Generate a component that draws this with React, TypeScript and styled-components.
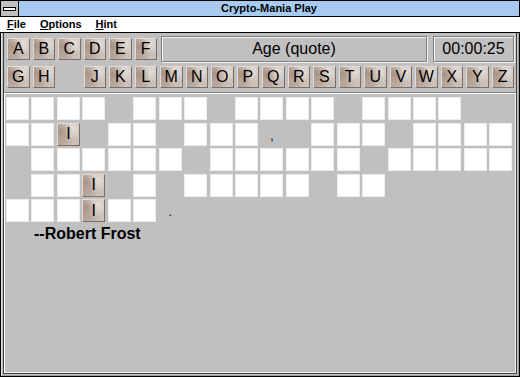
import React from 'react'
import styled, { createGlobalStyle } from 'styled-components'

const GlobalStyle = createGlobalStyle`
    html, body {
        margin: 0;
        padding: 0;
        background: #c0c0c0;
    }
    body {
        font-family: 'Liberation Sans', Arial, sans-serif;
    }
`

const Window = styled.div`
    width: 520px;
    height: 377px;
    box-sizing: border-box;
    display: flex;
    flex-direction: column;
    background: #c0c0c0;
    overflow: hidden;
`

const TitleBar = styled.div`
    height: 15px;
    display: flex;
    align-items: stretch;
    background: #a6caf0;
    border-top: 1px solid #000;
    border-bottom: 1px solid #000;
    border-right: 1px solid #000;
`

const SysMenu = styled.div`
    width: 17px;
    border-left: 1px solid #000;
    border-right: 1px solid #000;
    background: #c0c0c0;
    display: flex;
    align-items: center;
    justify-content: center;

    & > span {
        display: block;
        width: 11px;
        height: 2px;
        background: #fff;
        border: 1px solid #000;
    }
`

const Title = styled.div`
    flex: 1;
    text-align: center;
    font-size: 11px;
    font-weight: 700;
    line-height: 15px;
    color: #000;
`

const MenuBar = styled.div`
    height: 15px;
    display: flex;
    background: #fff;
    border-bottom: 1px solid #000;
`

const MenuItem = styled.div`
    padding: 0 7px;
    font-size: 11px;
    font-weight: 700;
    line-height: 15px;
    color: #000;

    u {
        text-decoration: underline;
        text-underline-offset: 1px;
    }
`

const Frame = styled.div`
    flex: 1;
    display: flex;
    border-left: 1px solid #000;
    border-right: 1px solid #000;
    border-bottom: 1px solid #000;
    padding: 0 2px 2px 2px;
    background: #c0c0c0;
    box-shadow: inset 1px 0 #e0e0e0, inset -1px -1px #a0a0a0;
`

const Client = styled.div`
    flex: 1;
    display: flex;
    flex-direction: column;
    border-left: 1px solid #404040;
    border-right: 1px solid #404040;
    border-bottom: 1px solid #404040;
    background: #c0c0c0;
    min-height: 0;
`

const Controls = styled.div`
    display: flex;
    flex-direction: column;
    gap: 4px;
    padding: 3px 0 0 3px;
    width: 507px;
`

const TopRow = styled.div`
    display: flex;
    align-items: center;
    height: 26px;
`

const TileRow = styled.div`
    display: grid;
    grid-template-columns: repeat(20, 22.5px);
    column-gap: 3px;
    height: 22px;
`

const Tile = styled.div<{ $small?: boolean }>`
    width: ${({ $small }) => ($small ? '23px' : '22.5px')};
    height: ${({ $small }) => ($small ? '23px' : '22px')};
    box-sizing: border-box;
    display: flex;
    align-items: center;
    justify-content: center;
    font-size: 16px;
    color: #000;
    border: 1px solid;
    border-color: #e4dcd4 #7a6e66 #7a6e66 #e4dcd4;
    background:
        radial-gradient(ellipse at 18% 35%, rgba(140, 112, 98, 0.45), transparent 45%),
        radial-gradient(ellipse at 30% 80%, rgba(150, 125, 110, 0.35), transparent 40%),
        radial-gradient(circle at 75% 25%, rgba(240, 234, 228, 0.55), transparent 45%),
        radial-gradient(circle at 65% 80%, rgba(176, 162, 150, 0.35), transparent 40%),
        repeating-linear-gradient(55deg, rgba(255, 255, 255, 0.08) 0 1px, rgba(90, 70, 60, 0.07) 1px 3px),
        linear-gradient(90deg, #b8a89c 0%, #cfc3ba 35%, #dad0c8 65%, #d2c8c0 100%);
`

const TopTiles = styled.div`
    display: flex;
    gap: 3px;
`

const InfoBox = styled.div<{ $width?: number }>`
    height: 26px;
    box-sizing: border-box;
    display: flex;
    align-items: center;
    justify-content: center;
    font-size: 16px;
    color: #000;
    background: #c0c0c0;
    border: 1px solid #808080;
    box-shadow: inset 1px 1px #f4f4f4, 1px 1px #f4f4f4;
    ${({ $width }) => ($width ? `width: ${$width}px;` : 'flex: 1;')}
`

const Category = styled(InfoBox)`
    margin-left: 4px;
    margin-right: 6px;
`

const Board = styled.div`
    flex: 1;
    margin-top: 4px;
    border-top: 1px solid #808080;
    box-shadow: inset 1px 1px #fff, inset -1px -1px #f0f0f0;
    padding: 4px 0 0 2px;
`

const Grid = styled.div`
    display: grid;
    grid-template-columns: repeat(20, 23px);
    grid-auto-rows: 23px;
    column-gap: 2.45px;
    row-gap: 2.5px;
`

const Cell = styled.div`
    box-sizing: border-box;
    background: #fff;
    border: 1px solid #ececec;
`

const Gap = styled.div`
    display: flex;
    align-items: center;
    justify-content: center;
    font-size: 12px;
    line-height: 23px;
    padding-top: 4px;
    color: #000;
`

const Author = styled.div`
    margin-top: 3px;
    padding-left: 28px;
    font-size: 16px;
    font-weight: 700;
    line-height: 18px;
    color: #000;
`

const lines = [
    '____ ___ ____ ____',
    '__I __ ___, ___ ____',
    ' ______ ______ _____',
    ' __I _ _____ __',
    '___I__.'
]

const row1 = ['A', 'B', 'C', 'D', 'E', 'F']
const row2 = ['G', 'H', '', 'J', 'K', 'L', 'M', 'N', 'O', 'P', 'Q', 'R', 'S', 'T', 'U', 'V', 'W', 'X', 'Y', 'Z']

export default function App() {
    return (
        <Window>
            <GlobalStyle />
            <TitleBar>
                <SysMenu>
                    <span />
                </SysMenu>
                <Title>Crypto-Mania Play</Title>
            </TitleBar>
            <MenuBar>
                <MenuItem><u>F</u>ile</MenuItem>
                <MenuItem><u>O</u>ptions</MenuItem>
                <MenuItem><u>H</u>int</MenuItem>
            </MenuBar>
            <Frame>
                <Client>
                    <Controls>
                        <TopRow>
                            <TopTiles>
                                {row1.map(l => (
                                    <Tile key={l}>{l}</Tile>
                                ))}
                            </TopTiles>
                            <Category>Age (quote)</Category>
                            <InfoBox $width={81}>00:00:25</InfoBox>
                        </TopRow>
                        <TileRow>
                            {row2.map((l, i) => (l ? <Tile key={l}>{l}</Tile> : <div key={i} />))}
                        </TileRow>
                    </Controls>
                    <Board>
                        <Grid>
                            {lines.map((line, r) =>
                                line.split('').map((ch, c) => {
                                    const key = r + '-' + c
                                    const pos = { gridRow: r + 1, gridColumn: c + 1 }
                                    if (ch === '_') return <Cell key={key} style={pos} />
                                    if (ch === ' ') return <Gap key={key} style={pos} />
                                    if (ch === ',' || ch === '.') return <Gap key={key} style={pos}>{ch}</Gap>
                                    return <Tile key={key} $small style={pos}>{ch}</Tile>
                                })
                            )}
                        </Grid>
                        <Author>--Robert Frost</Author>
                    </Board>
                </Client>
            </Frame>
        </Window>
    )
}
